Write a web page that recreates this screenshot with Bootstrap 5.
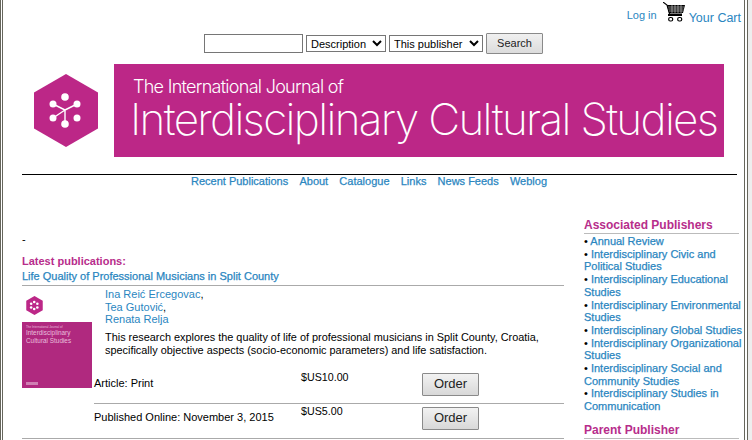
<!DOCTYPE html>
<html lang="en"><head><meta charset="utf-8"><title>IJICS</title>
<link rel="stylesheet" href="https://cdn.jsdelivr.net/npm/bootstrap@5.3.0/dist/css/bootstrap.min.css">
<style>
html,body{height:440px;overflow:hidden;background:#eee}
body{font-family:"Liberation Sans",Arial,sans-serif;font-size:11px;line-height:12.5px;color:#000}
a{color:#2a86bf;text-decoration:none}
.strong-link{-webkit-text-stroke:.25px #2a86bf}
.frame{width:748px;height:440px;background:#fff;border-left:3px double #66665c;border-right:4px double #66665c;padding:0 7px 0 19px;overflow:hidden}
.toplinks{height:33px;padding-top:9px}
.toplinks .login{font-size:11px;margin-right:6px}
.toplinks .cart{font-size:12.5px;margin-left:4px;margin-right:-4px;margin-top:3px}
.cartico{margin-top:-7px}
.searchrow{height:21px;gap:3px;padding-right:12px}
.srch{height:19px;width:99px;border:1px solid #767676;padding:0 2px}
.sel{height:17px;font-size:11px;border:1px solid #767676;background:#fff;color:#000;padding:0;font-family:"Liberation Sans",Arial,sans-serif}
.sbtn{height:21px;width:57px;padding:0;font-size:11px;color:#222;border:1px solid #8a8a8a;border-radius:1px;background:linear-gradient(#f0f0f0,#dcdcdc)}
.bannerrow{margin-top:10px;height:93px}
.hexbox{width:92px;padding-left:11px;padding-top:10px;flex:none}
.banner{width:610px;height:93px;background:#bc2787;color:#fff;font-family:Inter,"Liberation Sans",sans-serif;font-weight:300;padding:12px 0 0 19px;overflow:hidden;white-space:nowrap}
.bt1{font-size:18px;line-height:22px;letter-spacing:-.72px}
.bt2{font-size:44px;line-height:48px;font-weight:200;letter-spacing:-1.65px;margin:-3px 0 0 -3px}
.rule{border-top:1px solid #000;margin-top:17px;height:0}
.menu{gap:11.2px;padding-left:169px;height:36px}
.cols{gap:20px}
.maincol{width:542px;flex:none;padding-top:22px}
.sidecol{width:160px;flex:none;margin-top:7px}
.mag{color:#b72d8b;font-weight:700}
.h-side{font-size:12px;line-height:14px;border-bottom:1px solid #bbb;padding-bottom:1px;margin:0 0 1px 0;font-weight:700;color:#b72d8b;width:155px}
.h-side.second{margin-top:10px}
.sideitem{display:block;line-height:12.7px}
.dash{height:22px}
.latest{height:14px}
.titlelink{display:block;border-bottom:1px solid #aaa;height:17px;padding-top:1px}
.pubitem{border-bottom:1px solid #aaa}
.thumbcol{width:72px;flex:none;padding-top:10px}
.thumb{width:70px;height:66px;background:#b0297f;margin-top:7px;color:#e9bfdc;font-size:6.4px;line-height:8px;padding:3px 0 3px 4px;overflow:hidden}
.tt{font-size:3px;line-height:4px;white-space:nowrap}
.thumbmark{width:12px;height:3px;background:#cf7fb3}
.infocol{flex:1;min-width:0}
.authors{padding:2px 0 0 11px;line-height:12.5px}
.abs{padding:5px 0 0 11px;line-height:13.5px;font-size:10.9px;height:44px;width:470px}
.orow{height:34px}
.orow.divided{border-bottom:1px solid #aaa}
.oname{width:207px;flex:none;padding-top:7px}
.oprice{width:121px;flex:none;padding-top:1px;font-size:10.7px}
.obtn{width:57px;height:23px;margin-top:3px;padding:0;font-size:13px;color:#222;border:1px solid #8a8a8a;border-radius:1px;background:linear-gradient(#f2f2f2,#d8d8d8)}
</style></head><body>
<div class="frame">
  <div class="toplinks d-flex justify-content-end align-items-start">
    <a class="login" href="#">Log in</a>
    <svg class="cartico" width="22" height="20" viewBox="0 0 22 20"><path d="M0 0l4 3 2.500 9H19" fill="none" stroke="#000" stroke-width="1.1"/><path d="M4 3h18l-2 8H6z" fill="#000"/><path d="M5 5h16M5.500 7h15M6 9h14M9 3v8M12 3v8M15 3v8M18 3v8" stroke="#fff" stroke-width=".5"/><rect x="5" y="12" width="14" height="2" fill="#000"/><rect x="5.700" y="15.500" width="4" height="3.500" rx="1.500" fill="#fff" stroke="#000" stroke-width="1.200"/><rect x="14.700" y="15.500" width="4" height="3.500" rx="1.500" fill="#fff" stroke="#000" stroke-width="1.200"/></svg>
    <a class="cart" href="#">Your Cart</a>
  </div>
  <div class="searchrow d-flex justify-content-center align-items-center">
    <input class="srch" type="text" aria-label="Search">
    <select class="sel" style="width:80px" aria-label="Field"><option>Description</option></select>
    <select class="sel" style="width:94px" aria-label="Scope"><option>This publisher</option></select>
    <button class="sbtn" type="button">Search</button>
  </div>
  <div class="bannerrow d-flex">
    <div class="hexbox"><svg class="d-block" width="66" height="73" viewBox="0 0 66 73"><path d="M33 0L65 18.500V54.500L33 73L1 54.500V18.500Z" fill="#bc2787"/><g stroke="#fff" stroke-width="1.4" fill="none"><path d="M32 36V50M32 36L20 30M32 36L44 30M32 36L20 44"/></g><g fill="#fff"><circle cx="32" cy="23" r="3.800"/><circle cx="20" cy="30" r="3.500"/><circle cx="44" cy="30" r="3.500"/><circle cx="20" cy="44" r="3.500"/><circle cx="44" cy="44" r="3.500"/><circle cx="32" cy="50" r="3.800"/></g></svg></div>
    <div class="banner"><div class="bt1">The International Journal of</div><div class="bt2">Interdisciplinary Cultural Studies</div></div>
  </div>
  <div class="rule"></div>
  <div class="menu d-flex"><a class="strong-link" href="#">Recent Publications</a><a class="strong-link" href="#">About</a><a class="strong-link" href="#">Catalogue</a><a class="strong-link" href="#">Links</a><a class="strong-link" href="#">News Feeds</a><a class="strong-link" href="#">Weblog</a></div>
  <div class="cols d-flex">
    <div class="maincol">
      <div class="dash">-</div>
      <div class="latest mag">Latest publications:</div>
      <a class="titlelink strong-link" href="#">Life Quality of Professional Musicians in Split County</a>
      <div class="pubitem d-flex">
        <div class="thumbcol"><svg class="d-block" style="margin-left:4px" width="17" height="19" viewBox="0 0 66 73"><path d="M33 0L65 18.500V54.500L33 73L1 54.500V18.500Z" fill="#bc2787"/><g fill="#fff"><circle cx="32" cy="23" r="5"/><circle cx="20" cy="30" r="5"/><circle cx="44" cy="30" r="5"/><circle cx="20" cy="44" r="5"/><circle cx="44" cy="44" r="5"/><circle cx="32" cy="50" r="5"/></g></svg>
          <div class="thumb d-flex flex-column"><div class="tt">The International Journal of</div><div>Interdisciplinary<br>Cultural Studies</div><div class="thumbmark mt-auto"></div></div></div>
        <div class="infocol">
          <div class="authors"><a href="#">Ina Reić Ercegovac</a>,<br><a href="#">Tea Gutović</a>,<br><a href="#">Renata Relja</a></div>
          <div class="abs">This research explores the quality of life of professional musicians in Split County, Croatia, specifically objective aspects (socio-economic parameters) and life satisfaction.</div>
          <div class="orow divided d-flex"><div class="oname">Article: Print</div><div class="oprice">$US10.00</div><button class="obtn" type="button">Order</button></div>
          <div class="orow d-flex"><div class="oname">Published Online: November 3, 2015</div><div class="oprice">$US5.00</div><button class="obtn" type="button">Order</button></div>
        </div>
      </div>
    </div>
    <div class="sidecol">
      <div class="h-side">Associated Publishers</div>
      <span class="sideitem">• <a class="strong-link" href="#">Annual Review</a></span>
      <span class="sideitem">• <a class="strong-link" href="#">Interdisciplinary Civic and Political Studies</a></span>
      <span class="sideitem">• <a class="strong-link" href="#">Interdisciplinary Educational Studies</a></span>
      <span class="sideitem">• <a class="strong-link" href="#">Interdisciplinary Environmental Studies</a></span>
      <span class="sideitem">• <a class="strong-link" href="#">Interdisciplinary Global Studies</a></span>
      <span class="sideitem">• <a class="strong-link" href="#">Interdisciplinary Organizational Studies</a></span>
      <span class="sideitem">• <a class="strong-link" href="#">Interdisciplinary Social and Community Studies</a></span>
      <span class="sideitem">• <a class="strong-link" href="#">Interdisciplinary Studies in Communication</a></span>
      <div class="h-side second">Parent Publisher</div>
    </div>
  </div>
</div>
</body></html>
